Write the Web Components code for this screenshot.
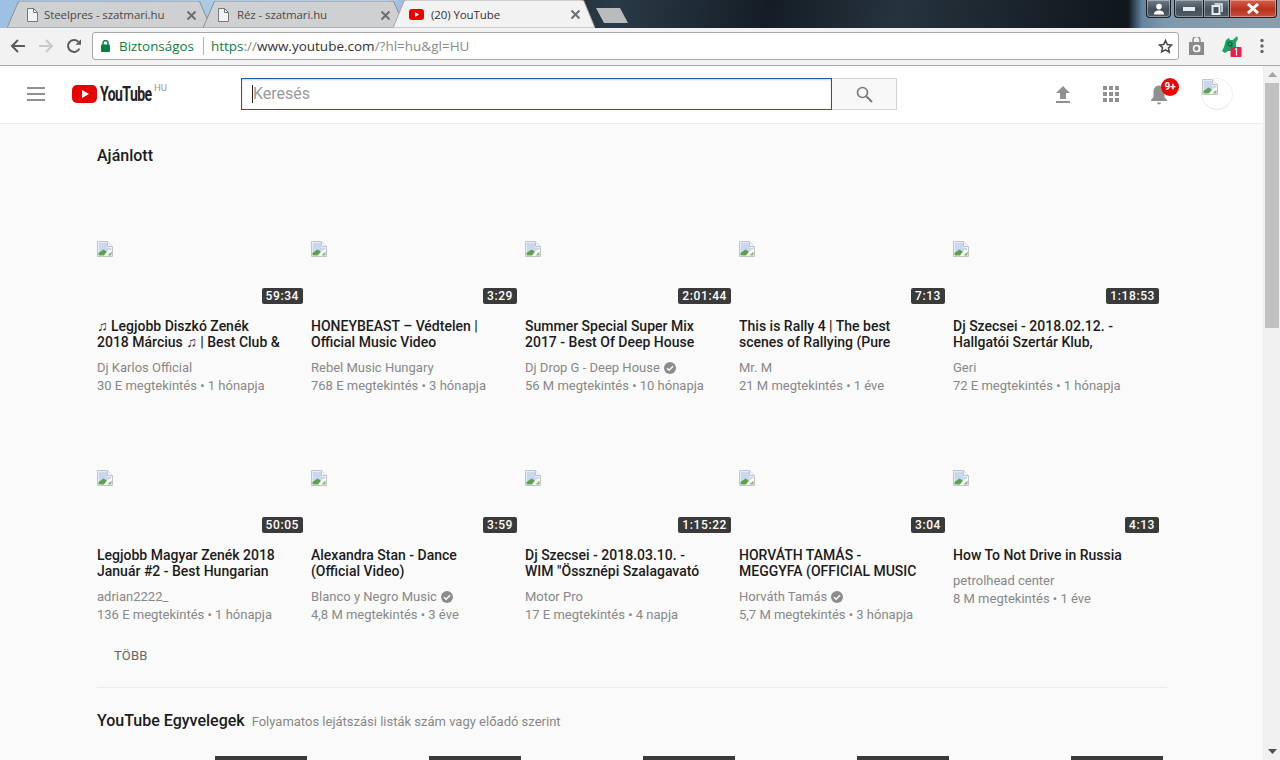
<!DOCTYPE html>
<html lang="hu">
<head>
<meta charset="utf-8">
<title>(20) YouTube</title>
<style>
  html, body { margin: 0; height: 760px; overflow: hidden; background: #fafafa; font-family: Roboto, "Liberation Sans", sans-serif; }
</style>
</head>
<body>
<chrome-frame>
  <chrome-tab slot="tabs" kind="file" style="--w:204px;--ml:0px;--pl:20px;--gap:6px">Steelpres - szatmari.hu</chrome-tab>
  <chrome-tab slot="tabs" kind="file" style="--w:202px;--ml:-8px;--pl:15px;--gap:8px">Réz - szatmari.hu</chrome-tab>
  <chrome-tab slot="tabs" kind="yt" active style="--w:202px;--ml:-12px;--pl:16px;--gap:7px">(20) YouTube</chrome-tab>
</chrome-frame>
<chrome-toolbar></chrome-toolbar>
<yt-app>
  <yt-masthead></yt-masthead>
  <yt-shelf heading="Ajánlott">
    <yt-video duration="59:34">
      ♫ Legjobb Diszkó Zenék 2018 Március ♫ | Best Club &amp;
      <span slot="channel">Dj Karlos Official</span>
      <span slot="meta">30 E megtekintés • 1 hónapja</span>
    </yt-video>
    <yt-video duration="3:29">
      HONEYBEAST – Védtelen | Official Music Video
      <span slot="channel">Rebel Music Hungary</span>
      <span slot="meta">768 E megtekintés • 3 hónapja</span>
    </yt-video>
    <yt-video duration="2:01:44" verified>
      Summer Special Super Mix 2017 - Best Of Deep House
      <span slot="channel">Dj Drop G - Deep House</span>
      <span slot="meta">56 M megtekintés • 10 hónapja</span>
    </yt-video>
    <yt-video duration="7:13">
      This is Rally 4 | The best scenes of Rallying (Pure
      <span slot="channel">Mr. M</span>
      <span slot="meta">21 M megtekintés • 1 éve</span>
    </yt-video>
    <yt-video duration="1:18:53">
      Dj Szecsei - 2018.02.12. - Hallgatói Szertár Klub,
      <span slot="channel">Geri</span>
      <span slot="meta">72 E megtekintés • 1 hónapja</span>
    </yt-video>
    <yt-video duration="50:05">
      Legjobb Magyar Zenék 2018 Január #2 - Best Hungarian
      <span slot="channel">adrian2222_</span>
      <span slot="meta">136 E megtekintés • 1 hónapja</span>
    </yt-video>
    <yt-video duration="3:59" verified>
      Alexandra Stan - Dance (Official Video)
      <span slot="channel">Blanco y Negro Music</span>
      <span slot="meta">4,8 M megtekintés • 3 éve</span>
    </yt-video>
    <yt-video duration="1:15:22">
      Dj Szecsei - 2018.03.10. - WIM "Össznépi Szalagavató
      <span slot="channel">Motor Pro</span>
      <span slot="meta">17 E megtekintés • 4 napja</span>
    </yt-video>
    <yt-video duration="3:04" verified>
      HORVÁTH TAMÁS - MEGGYFA (OFFICIAL MUSIC
      <span slot="channel">Horváth Tamás</span>
      <span slot="meta">5,7 M megtekintés • 3 hónapja</span>
    </yt-video>
    <yt-video duration="4:13">
      How To Not Drive in Russia
      <span slot="channel">petrolhead center</span>
      <span slot="meta">8 M megtekintés • 1 éve</span>
    </yt-video>
  </yt-shelf>
  <yt-mixes heading="YouTube Egyvelegek" sub="Folyamatos lejátszási listák szám vagy előadó szerint"></yt-mixes>
</yt-app>

<script>
(function(){
  const brokenIcon = `
    <svg width="16" height="16" viewBox="0 0 16 16" style="display:block">
      <path d="M.5.5h10l5 5v10H.5z" fill="#fff" stroke="#c4c4c4"/>
      <path d="M10.5.5v5h5" fill="#f4f4f4" stroke="#c4c4c4"/>
      <path d="M1.5 1.5h8.5v5h4.500v2L1.500 13z" fill="#c9d8f0"/>
      <path d="M1.5 14.500v-2.500l5-3.500 3.500 2-3 4z" fill="#5aa34a"/>
      <path d="M10.5 14.500l4-4v4z" fill="#7db86e"/>
    </svg>`;

  class ChromeFrame extends HTMLElement {
    connectedCallback () {
      this.attachShadow({mode: 'open'}).innerHTML = `
        <style>
          :host {
            display: flex;
            height: 28px;
            padding-left: 7px;
            padding-right: 3px;
            overflow: hidden;
            background:
              linear-gradient(90deg, transparent 0, transparent 1128px, #64859f 1142px, #7f99ad 1165px, #8b9eae 1280px),
              linear-gradient(100deg, #9dc0e2 0, #b9cfe4 30%, #7fa6d0 33%, #1d2731 40%, #2a3a46 48%, #141d25 60%, #26333d 70%, #0f161c 88%);
          }
          .tabs { display: flex; align-items: flex-end; }
          .newtab { width: 32px; height: 15px; margin: 8px 0 0 1px; }
          .win { display: flex; margin-left: auto; height: 18px; gap: 3px; }
          .win div {
            display: flex; align-items: center; justify-content: center;
            box-sizing: border-box; height: 18px;
            border: 1px solid #1c2126; border-top: 0; border-radius: 0 0 4px 4px;
            box-shadow: inset 0 0 0 1px rgba(255,255,255,.35);
            background: linear-gradient(#6f7d88, #44515b 55%, #4f5d68);
          }
          .user { width: 25px; }
          .caption { display: flex; width: 103px; gap: 0 !important; }
          .win .caption { background: none; box-shadow: none; border: 0; }
          .win .caption div { border-radius: 0; }
          .min { width: 29px; border-right: 0 !important; border-radius: 0 0 0 4px !important; }
          .max { width: 26px; border-right: 0 !important; }
          .close { width: 48px; border-radius: 0 0 4px 0 !important; background: linear-gradient(#d4604a, #b8321f 55%, #c9503a) !important; color: #fff; }
        </style>
        <div class="tabs"><slot name="tabs"></slot></div>
        <svg class="newtab" viewBox="0 0 32 15"><path d="M0 0h24l8 15H8z" fill="#b9bcbe"/></svg>
        <div class="win">
          <div class="user">
            <svg width="12" height="12" viewBox="0 0 12 12"><circle cx="6" cy="3.6" r="2.8" fill="#fff"/><path d="M1 11.5c0-3 2-4 5-4s5 1 5 4z" fill="#fff"/></svg>
          </div>
          <div class="caption">
            <div class="min"><svg width="12" height="6" viewBox="0 0 12 6"><rect y="1" width="12" height="4" fill="#e8ecef"/></svg></div>
            <div class="max"><svg width="12" height="12" viewBox="0 0 12 12"><path d="M3.5 1h7.5v8" fill="none" stroke="#e8ecef" stroke-width="1.5"/><rect x="1.5" y="3" width="7" height="8" fill="none" stroke="#e8ecef" stroke-width="2"/></svg></div>
            <div class="close"><svg width="14" height="11" viewBox="0 0 14 11"><path d="M2 1l10 9M12 1L2 10" stroke="#fff" stroke-width="3"/></svg></div>
          </div>
        </div>
      `;
    }
  }
  window.customElements.define('chrome-frame', ChromeFrame);

  class ChromeTab extends HTMLElement {
    connectedCallback () {
      const active = this.hasAttribute('active');
      const fill = active ? '#f2f2f2' : '#cfd0d2';
      const edge = active ? '#a8a8a8' : '#8b9097';
      const icon = this.getAttribute('kind') === 'yt'
        ? `<svg width="15" height="11" viewBox="0 0 15 11"><rect width="15" height="11" rx="3" fill="#e80000"/><path d="M6 3l4 2.5L6 8z" fill="#fff"/></svg>`
        : `<svg width="11" height="14" viewBox="0 0 11 14"><path d="M.5.5h6l4 4v9H.5z" fill="#f2f2f2" stroke="#777"/><path d="M6.5.5v4h4" fill="none" stroke="#777"/></svg>`;
      this.attachShadow({mode: 'open'}).innerHTML = `
        <style>
          :host {
            display: flex;
            position: relative;
            align-items: center;
            box-sizing: border-box;
            width: var(--w);
            height: 27px;
            margin-left: var(--ml);
            padding: 1px 12px 0 var(--pl);
            gap: var(--gap);
            font: 11.5px/16px "Open Sans", "Noto Sans", sans-serif;
            letter-spacing: -.1px;
            color: ${active ? '#333' : '#4a4a4a'};
            ${active ? 'z-index: 2; height: 28px;' : ''}
          }
          .shape { position: absolute; inset: 0; width: 100%; height: 100%; }
          .icon, .label, .x { position: relative; }
          .icon { display: flex; flex: none; }
          .label { flex: 1; white-space: nowrap; overflow: hidden; }
          .x { flex: none; display: flex; margin-right: 2px; }
        </style>
        <svg class="shape" viewBox="0 0 200 28" preserveAspectRatio="none">
          <path d="M0 28 L11 1 Q12 0 14 0 H186 Q188 0 189 1 L200 28z" fill="${fill}" stroke="${edge}" vector-effect="non-scaling-stroke"/>
        </svg>
        <span class="icon">${icon}</span>
        <span class="label"><slot></slot></span>
        <span class="x"><svg width="11" height="11" viewBox="0 0 11 11"><path d="M1.5 1.5l8 8M9.5 1.5l-8 8" stroke="#6e6e6e" stroke-width="2"/></svg></span>
      `;
    }
  }
  window.customElements.define('chrome-tab', ChromeTab);

  class ChromeToolbar extends HTMLElement {
    connectedCallback () {
      this.attachShadow({mode: 'open'}).innerHTML = `
        <style>
          :host {
            display: flex;
            align-items: center;
            box-sizing: border-box;
            height: 38px;
            padding: 0 0 2px 0;
            background: #f2f2f2;
            border-bottom: 1px solid #a9a9a9;
          }
          .nav { display: flex; align-items: center; width: 92px; flex: none; padding-left: 10px; box-sizing: border-box; gap: 12px; }
          .nav svg { display: block; }
          .omni {
            display: flex; align-items: center;
            box-sizing: border-box; width: 1087px; height: 28px; margin-top: 1px; padding: 0 5px 0 8px;
            background: #fff; border: 1px solid #a9a9a9; border-radius: 3px;
            font: 13.5px/18px "Open Sans", "Noto Sans", sans-serif;
          }
          .secure { color: #0b8043; margin-left: 9px; font-size: 13.4px; }
          .sep { width: 1px; height: 18px; background: #b5b5b5; margin: 0 7px 0 9px; }
          .url { color: #8a8a8a; flex: 1; white-space: nowrap; }
          .url b { font-weight: 400; color: #0b8043; }
          .url i { font-style: normal; color: #333; }
          .ext { display: flex; align-items: center; flex: 1; }
          .ext svg { display: block; }
          .bag { margin-left: 9px; }
          .scan { margin-left: 15px; }
          .dots { margin-left: 18px; }
        </style>
        <div class="nav">
          <svg width="16" height="16" viewBox="0 0 16 16"><path d="M15 8H2M8 2L2 8l6 6" fill="none" stroke="#5a5a5a" stroke-width="2"/></svg>
          <svg width="16" height="16" viewBox="0 0 16 16"><path d="M1 8h13M8 2l6 6-6 6" fill="none" stroke="#c9c9c9" stroke-width="2"/></svg>
          <svg width="16" height="16" viewBox="0 0 16 16"><path d="M13.4 10.6A6 6 0 1 1 12.3 3.7" fill="none" stroke="#5a5a5a" stroke-width="2"/><path d="M9.5 6.8H15V1.2z" fill="#5a5a5a"/></svg>
        </div>
        <div class="omni">
          <svg width="9" height="12" viewBox="0 0 9 12"><rect y="4.5" width="9" height="7.5" rx="1" fill="#0b8043"/><path d="M2 5V3a2.5 2.5 0 0 1 5 0v2" fill="none" stroke="#0b8043" stroke-width="1.4"/></svg>
          <span class="secure">Biztonságos</span>
          <span class="sep"></span>
          <span class="url"><b>https</b>://<i>www.youtube.com</i>/?hl=hu&amp;gl=HU</span>
          <svg width="15" height="15" viewBox="0 0 24 24"><path d="M12 2.5l2.9 6.3 6.9.8-5.1 4.7 1.4 6.8L12 17.2 5.9 20.6l1.4-6.8L2.2 9.6l6.9-.8z" fill="#fff" stroke="#444" stroke-width="2.4"/></svg>
        </div>
        <div class="ext">
          <svg class="bag" width="17" height="18" viewBox="0 0 17 18"><path d="M1 5h15v13H1z" fill="#8a8a8a"/><path d="M5 5V3a3.5 3.5 0 0 1 7 0v2" fill="none" stroke="#8a8a8a" stroke-width="1.5"/><circle cx="8.5" cy="11.5" r="3" fill="none" stroke="#fff" stroke-width="1.5"/><path d="M11.5 8.5v6" stroke="#fff" stroke-width="1.5"/></svg>
          <svg class="scan" width="22" height="22" viewBox="0 0 22 22"><path d="M6 5l3-2 1 2h3l4-4 1 3-2 3v5l-3 4-5 0-3 2-3-2 2-4z" fill="#16a765"/><circle cx="10" cy="9" r="2" fill="none" stroke="#0b5c36" stroke-width="1.2"/><rect x="10.5" y="12" width="11" height="10" rx="1" fill="#e91e4b"/><path d="M15 14.5l1.5-1v7" fill="none" stroke="#fff" stroke-width="1.2"/></svg>
          <svg class="dots" width="4" height="16" viewBox="0 0 4 16"><circle cx="2" cy="2.5" r="1.7" fill="#666"/><circle cx="2" cy="8" r="1.7" fill="#666"/><circle cx="2" cy="13.5" r="1.7" fill="#666"/></svg>
        </div>
      `;
    }
  }
  window.customElements.define('chrome-toolbar', ChromeToolbar);

  class YtApp extends HTMLElement {
    connectedCallback () {
      this.attachShadow({mode: 'open'}).innerHTML = `
        <style>
          :host { display: flex; height: 694px; overflow: hidden; background: #fafafa; }
          .page { flex: none; width: 1263px; height: 694px; overflow: hidden; }
          .bar { flex: none; width: 17px; height: 694px; box-sizing: border-box; background: #f1f1f1; display: flex; flex-direction: column; align-items: center; border-left: 1px solid #eee; }
          .up, .down { flex: none; height: 17px; display: flex; align-items: center; justify-content: center; }
          .thumb { width: 14px; height: 245px; background: #c1c1c1; }
          .gap { flex: 1; }
        </style>
        <div class="page"><slot></slot></div>
        <div class="bar">
          <div class="up"><svg width="9" height="5" viewBox="0 0 9 5"><path d="M4.5 0L9 5H0z" fill="#a3a3a3"/></svg></div>
          <div class="thumb"></div>
          <div class="gap"></div>
          <div class="down"><svg width="9" height="5" viewBox="0 0 9 5"><path d="M0 0h9L4.5 5z" fill="#505050"/></svg></div>
        </div>
      `;
    }
  }
  window.customElements.define('yt-app', YtApp);

  class YtMasthead extends HTMLElement {
    connectedCallback () {
      this.attachShadow({mode: 'open'}).innerHTML = `
        <style>
          :host {
            display: flex;
            align-items: center;
            box-sizing: border-box;
            height: 58px;
            padding: 0 30px 1px 27px;
            background: #fff;
            border-bottom: 1px solid #ececec;
          }
          .burger { flex: none; display: block; margin-right: 27px; }
          .logo { display: flex; align-items: center; flex: none; width: 169px; position: relative; }
          .word {
            display: inline-block; transform: scaleX(.7); transform-origin: 0 50%;
            font: 700 20px/24px Roboto, sans-serif; color: #222; letter-spacing: -.8px; margin-left: 3px;
          }
          .hu { position: absolute; left: 82px; top: 0; font: 400 9.5px/12px Roboto, sans-serif; color: #999; }
          .search { display: flex; flex: none; height: 32px; width: 656px; }
          .input {
            flex: 1; box-sizing: border-box; display: flex; align-items: center; padding-left: 10px;
            border: 1px solid #1f5a96;
            box-shadow: inset 0 1px 2px rgba(0,0,0,.2);
            font: 400 16px/20px Roboto, sans-serif; color: #999;
          }
          .caret { width: 1px; height: 18px; background: #222; }
          .btn {
            flex: none; width: 65px; box-sizing: border-box; display: flex; align-items: center; justify-content: center;
            background: #f8f8f8; border: 1px solid #d3d3d3; border-left: 0;
          }
          .icons { display: flex; align-items: center; margin-left: auto; gap: 24px; position: relative; }
          .icons svg { display: block; }
          .bell { position: relative; }
          .badge {
            position: absolute; left: 14px; top: -4px; width: 18px; height: 18px; border-radius: 50%;
            background: #f00000; color: #fff; font: 700 10px/18px Roboto, sans-serif; text-align: center;
          }
          .avatar {
            box-sizing: border-box; width: 32px; height: 32px; margin-left: 6px; border-radius: 50%; padding: 0;
            border: 1px solid #f1f1f1; border-bottom-color: #e8e8e8;
          }
        </style>
        <svg class="burger" width="18" height="14" viewBox="0 0 18 14"><path d="M0 1h18M0 7h18M0 13h18" stroke="#909090" stroke-width="2"/></svg>
        <div class="logo">
          <svg width="25" height="18" viewBox="0 0 25 18"><rect width="25" height="18" rx="5" fill="#e80000"/><path d="M10 5l7 4-7 4z" fill="#fff"/></svg>
          <span class="word">YouTube</span>
          <span class="hu">HU</span>
        </div>
        <div class="search">
          <div class="input"><span class="caret"></span>Keresés</div>
          <div class="btn"><svg width="17" height="17" viewBox="0 0 17 17"><circle cx="6.5" cy="6.5" r="5" fill="none" stroke="#777" stroke-width="1.6"/><path d="M10.5 10.5l5.5 5.5" stroke="#777" stroke-width="2"/></svg></div>
        </div>
        <div class="icons">
          <svg width="24" height="24" viewBox="0 0 24 24"><path d="M12 4l7 7h-4v6H9v-6H5z" fill="#909090"/><rect x="5" y="19" width="14" height="2" fill="#909090"/></svg>
          <svg width="24" height="24" viewBox="0 0 24 24" fill="#909090"><rect x="4" y="4" width="4" height="4"/><rect x="10" y="4" width="4" height="4"/><rect x="16" y="4" width="4" height="4"/><rect x="4" y="10" width="4" height="4"/><rect x="10" y="10" width="4" height="4"/><rect x="16" y="10" width="4" height="4"/><rect x="4" y="16" width="4" height="4"/><rect x="10" y="16" width="4" height="4"/><rect x="16" y="16" width="4" height="4"/></svg>
          <div class="bell">
            <svg width="24" height="24" viewBox="0 0 24 24"><path d="M12 3.5c-3.5 0-5.5 3-5.5 6.5v5L4 18v1h16v-1l-2.5-3v-5c0-3.5-2-6.5-5.500-6.500z" fill="#909090"/><path d="M10 20.5h4a2 2 0 0 1-4 0z" fill="#909090"/></svg>
            <span class="badge">9+</span>
          </div>
          <div class="avatar">${brokenIcon}</div>
        </div>
      `;
    }
  }
  window.customElements.define('yt-masthead', YtMasthead);

  class YtShelf extends HTMLElement {
    connectedCallback () {
      this.attachShadow({mode: 'open'}).innerHTML = `
        <style>
          :host { display: block; margin: 0 96px 0 97px; padding-top: 22px; border-bottom: 1px solid #ebebeb; height: 541px; box-sizing: content-box; }
          h2 { margin: 0 0 75px; font: 500 16px/20px Roboto, sans-serif; color: #1c1c1c; }
          .grid { display: grid; grid-template-columns: repeat(5, 206px); column-gap: 8px; row-gap: 76px; }
          .more { margin: 25px 0 0 17px; font: 400 13px/16px Roboto, sans-serif; letter-spacing: .2px; color: #666; }
        </style>
        <h2>${this.getAttribute('heading')}</h2>
        <div class="grid"><slot></slot></div>
        <div class="more">TÖBB</div>
      `;
    }
  }
  window.customElements.define('yt-shelf', YtShelf);

  class YtVideo extends HTMLElement {
    connectedCallback () {
      const check = this.hasAttribute('verified')
        ? `<svg class="check" width="12" height="12" viewBox="0 0 12 12"><circle cx="6" cy="6" r="6" fill="#8c8c8c"/><path d="M3 6.2l2.1 2.1L9 4.2" fill="none" stroke="#fafafa" stroke-width="1.5"/></svg>`
        : '';
      this.attachShadow({mode: 'open'}).innerHTML = `
        <style>
          :host { display: block; height: 153px; }
          .thumb { position: relative; height: 67px; margin-bottom: 10px; }
          .time {
            position: absolute; right: 0; bottom: 4px; height: 16px; padding: 0 4px; border-radius: 2px;
            background: #3a3a3a; color: #fff; font: 500 12px/16px Roboto, sans-serif; letter-spacing: .6px;
          }
          .title { max-width: 184px; max-height: 32px; overflow: hidden; margin-bottom: 9px; font: 500 14px/16px Roboto, sans-serif; color: #1c1c1c; }
          .line { display: flex; align-items: center; gap: 4px; height: 18px; font: 400 13px/18px Roboto, sans-serif; color: #888; white-space: nowrap; }
          .check { display: block; flex: none; }
        </style>
        <div class="thumb">${brokenIcon}<span class="time">${this.getAttribute('duration')}</span></div>
        <div class="title"><slot></slot></div>
        <div class="line"><slot name="channel"></slot>${check}</div>
        <div class="line"><slot name="meta"></slot></div>
      `;
    }
  }
  window.customElements.define('yt-video', YtVideo);

  class YtMixes extends HTMLElement {
    connectedCallback () {
      this.attachShadow({mode: 'open'}).innerHTML = `
        <style>
          :host { display: block; margin: 0 96px 0 97px; padding-top: 23px; }
          .head { display: flex; align-items: baseline; gap: 7px; height: 20px; margin-bottom: 25px; }
          h2 { margin: 0; font: 500 16px/20px Roboto, sans-serif; color: #1c1c1c; }
          span { font: 400 13px/20px Roboto, sans-serif; color: #888; }
          .row { display: grid; grid-template-columns: repeat(5, 206px); column-gap: 8px; }
          .row div { width: 92px; height: 100px; margin-left: 118px; background: #3a3a3a; }
        </style>
        <div class="head"><h2>${this.getAttribute('heading')}</h2><span>${this.getAttribute('sub')}</span></div>
        <div class="row"><div></div><div></div><div></div><div></div><div></div></div>
      `;
    }
  }
  window.customElements.define('yt-mixes', YtMixes);
})();
</script>
</body>
</html>
